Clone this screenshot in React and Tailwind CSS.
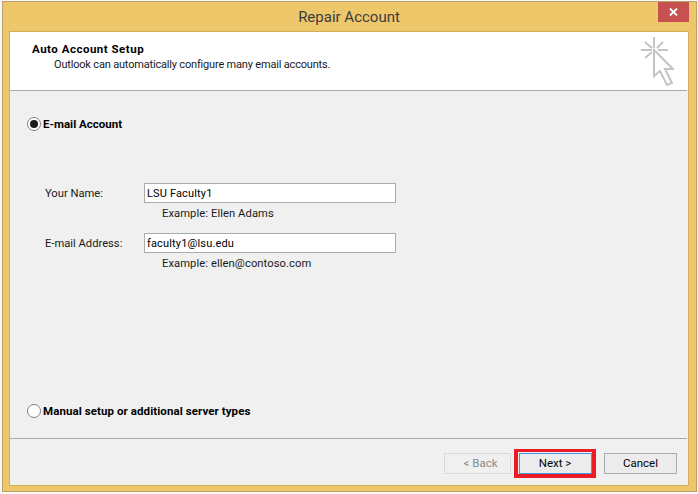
function Radio({ checked }) {
  return (
    <span className="w-[14px] h-[14px] rounded-full border border-[#808080] bg-white flex items-center justify-center shrink-0">
      {checked && <span className="w-[8px] h-[8px] rounded-full bg-[#1a1a1a]" />}
    </span>
  );
}
function Field({ label, value, example, className }) {
  return (
    <div className={className}>
      <div className="flex items-center h-[20px]">
        <span className="w-[99px] pt-[2px] text-[11.2px] text-[#1a1a1a]">{label}</span>
        <div className="w-[252px] h-[20px] border border-[#ababab] bg-white px-[2px] pt-[2px] flex items-center text-[11px] tracking-[0.15px] text-black">{value}</div>
      </div>
      <div className="pl-[117px] mt-[3px] h-[15px] text-[11.2px] tracking-[0.08px] leading-[16px] text-[#1a1a1a]">{example}</div>
    </div>
  );
}
function Btn({ children, className }) {
  return <div className={"h-[21px] flex items-center justify-center text-[11.5px] border " + className}>{children}</div>;
}
export default function App() {
  return (
    <div className="w-[698px] h-[494px] bg-[#f7f7f7] pt-px pl-[2px] font-['Roboto','Open_Sans',sans-serif]">
      <div className="w-[695px] h-[491px] bg-[#efc76b] border border-[#bda164] flex flex-col pl-[6px] pr-[7px] pb-[5px]">
        <div className="h-[29px] shrink-0 flex items-center relative">
          <div className="flex-1 text-center text-[15px] text-[#3c3c3c] pt-[1px]">Repair Account</div>
          <div className="absolute right-0 top-0 w-[31px] h-[20px] bg-[#c75050] flex items-center justify-center">
            <svg width="9" height="8" viewBox="0 0 9 8"><path d="M1 0.5 L8 7.5 M8 0.5 L1 7.5" stroke="#fff" strokeWidth="1.8" /></svg>
          </div>
        </div>
        <div className="flex-1 border border-[#d2ae5c] bg-[#f0f0f0] flex flex-col min-h-0">
          <div className="h-[58px] shrink-0 bg-white relative pl-[22px] pt-[9px]">
            <div className="text-[11.5px] tracking-[0.5px] leading-[16px] font-bold text-black">Auto Account Setup</div>
            <div className="text-[11px] tracking-[-0.18px] leading-[16px] text-[#1a1a1a] pl-[22px]">Outlook can automatically configure many email accounts.</div>
            <svg className="absolute right-[14px] top-[4px]" width="34" height="50" viewBox="0 0 34 50" fill="none" stroke="#c4c4c4" strokeWidth="2">
              <path d="M14 1V12 M1 14H12 M18 14H28 M5 6L12 12 M23 6L17 12 M5 22L12 16" />
              <path d="M14 14V40L20 35L27 49L32 47L25 33H33Z" />
            </svg>
          </div>
          <div className="h-px shrink-0 bg-[#a9a9a9] mr-px" />
          <div className="flex-1 flex flex-col pl-[17px] pt-[26px]">
            <label className="flex items-center gap-[2px] h-[14px] text-[11.5px] font-bold text-black"><Radio checked /><span className="pt-[2px]">E-mail Account</span></label>
            <Field className="mt-[52px] ml-[18px]" label="Your Name:" value="LSU Faculty1" example="Example: Ellen Adams" />
            <Field className="mt-[12px] ml-[18px]" label="E-mail Address:" value="faculty1@lsu.edu" example="Example: ellen@contoso.com" />
            <label className="flex items-center gap-[2px] h-[14px] mt-[133px] text-[11.5px] tracking-[0.08px] font-bold text-black"><Radio /><span className="pt-[2px]">Manual setup or additional server types</span></label>
          </div>
          <div className="h-px shrink-0 bg-[#a9a9a9] mr-px" />
          <div className="h-[46px] shrink-0 flex items-start justify-end pr-[11px] pt-[14px]">
            <Btn className="w-[67px] pl-[6px] border-[#d9d9d9] bg-[#f0f0f0] text-[#8a8a8a]">&lt; Back</Btn>
            <div className="ml-[3px] border-l-[4px] border-r-[4px] border-t-[3px] border-b-[4px] border-[#ed1c24] -mt-[4px] bg-[#f0f0f0] pl-px pt-px">
              <Btn className="w-[73px] pr-px border-[#3d9be9] bg-[#ececec] text-black">Next &gt;</Btn>
            </div>
            <Btn className="w-[73px] ml-[8px] border-[#ababab] bg-[#ececec] text-black">Cancel</Btn>
          </div>
        </div>
      </div>
    </div>
  );
}
